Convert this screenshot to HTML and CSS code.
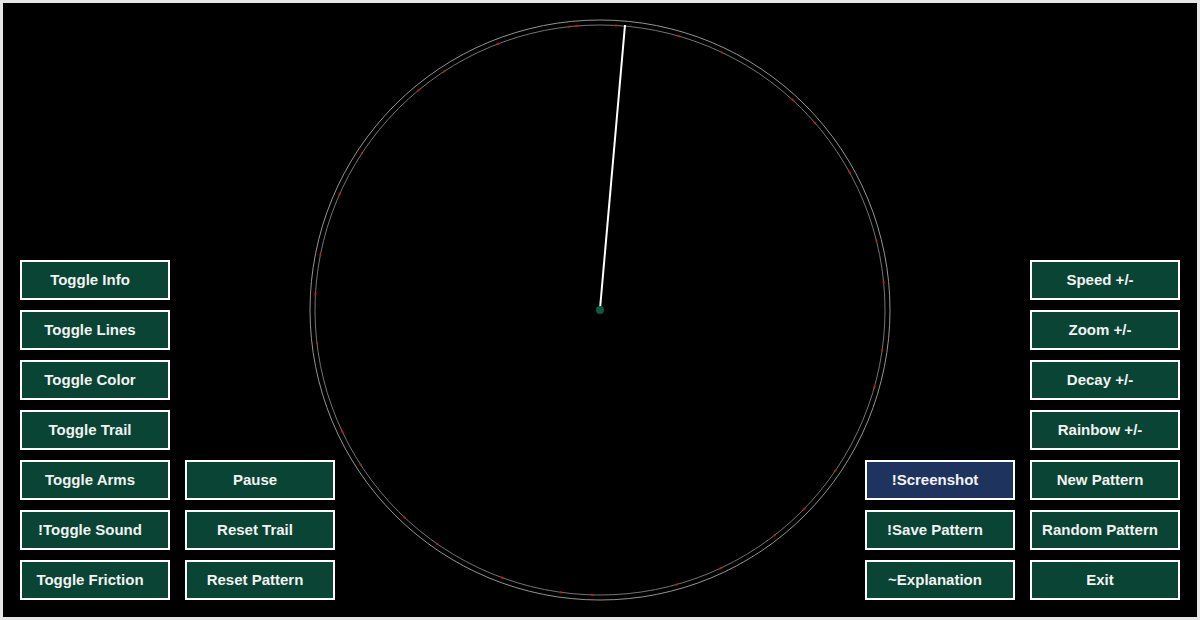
FILE: index.html
```html
<!DOCTYPE html>
<html>
<head>
<meta charset="utf-8">
<title>Pendulum</title>
<link rel="stylesheet" href="styles.css">
</head>
<body>
<div class="screen">
  <svg class="canvas" width="1200" height="620" viewBox="0 0 1200 620">
    <circle cx="600" cy="310" r="290" fill="none" stroke="#949494" stroke-width="1"/>
    <circle cx="600" cy="310" r="285" fill="none" stroke="#747474" stroke-width="1"/>
    <circle cx="600" cy="310" r="285" fill="none" stroke="#c41616" stroke-width="2"
      stroke-dasharray="3 37 2 61 3 44 2 83 3 29 2 58 3 71 2 40 3 66 2 35 3 90 2 47" transform="rotate(-95 600 310)"/>
    <line x1="600" y1="309" x2="625" y2="25" stroke="#ffffff" stroke-width="2"/>
    <circle cx="600" cy="310" r="4" fill="#0d5a40"/>
  </svg>
  <div class="controls">
    <div class="group">
      <div class="col">
        <div class="btn">Toggle Info</div>
        <div class="btn">Toggle Lines</div>
        <div class="btn">Toggle Color</div>
        <div class="btn">Toggle Trail</div>
        <div class="btn">Toggle Arms</div>
        <div class="btn">!Toggle Sound</div>
        <div class="btn">Toggle Friction</div>
      </div>
      <div class="col">
        <div class="btn">Pause</div>
        <div class="btn">Reset Trail</div>
        <div class="btn">Reset Pattern</div>
      </div>
    </div>
    <div class="group">
      <div class="col">
        <div class="btn active">!Screenshot</div>
        <div class="btn">!Save Pattern</div>
        <div class="btn">~Explanation</div>
      </div>
      <div class="col">
        <div class="btn">Speed +/-</div>
        <div class="btn">Zoom +/-</div>
        <div class="btn">Decay +/-</div>
        <div class="btn">Rainbow +/-</div>
        <div class="btn">New Pattern</div>
        <div class="btn">Random Pattern</div>
        <div class="btn">Exit</div>
      </div>
    </div>
  </div>
</div>
</body>
</html>
```
FILE: styles.css
```css
html, body {
  margin: 0;
  padding: 0;
  background: #e6e6e6;
}
.screen {
  position: relative;
  box-sizing: border-box;
  width: 1200px;
  height: 620px;
  border: 3px solid #e6e6e6;
  background: #000;
  overflow: hidden;
  font-family: "Liberation Sans", Arial, sans-serif;
}
.canvas {
  position: absolute;
  left: -3px;
  top: -3px;
}
.controls {
  position: relative;
  box-sizing: border-box;
  height: 614px;
  padding: 0 17px 17px 17px;
  display: flex;
  justify-content: space-between;
  align-items: flex-end;
}
.group {
  display: flex;
  align-items: flex-end;
  gap: 15px;
}
.col {
  display: flex;
  flex-direction: column;
  gap: 10px;
}
.btn {
  box-sizing: border-box;
  width: 150px;
  height: 40px;
  padding: 0 10px 1px 0;
  border: 2px solid #ffffff;
  background: #0a4434;
  color: #f2f2f2;
  font-weight: bold;
  font-size: 15px;
  display: flex;
  align-items: center;
  justify-content: center;
}
.btn.active {
  background: #1e345e;
}
```
